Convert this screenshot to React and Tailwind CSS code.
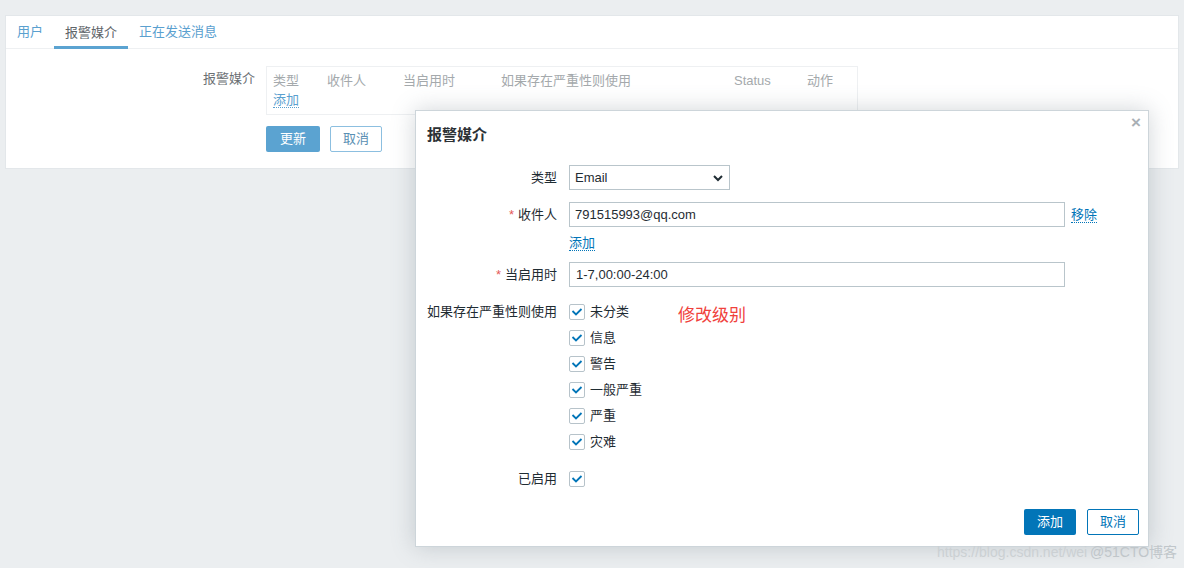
import React from 'react';

const FONT = { fontFamily: '"Liberation Sans", Arial, "Noto Sans CJK SC", sans-serif' };

function Check() {
    return (
        <span className="w-4 h-4 border border-[#b7c3ca] rounded-[2px] bg-white flex items-center justify-center shrink-0">
            <svg width="14" height="14" viewBox="0 0 14 14">
                <polyline points="2.5,6 6,9.5 11.5,4" fill="none" stroke="#0275b8" strokeWidth="1.8" />
            </svg>
        </span>
    );
}

function Link({ children }) {
    return <span className="text-[#0275b8] border-b border-dotted border-[#0275b8] leading-[15px]">{children}</span>;
}

export default function App() {
    const severities = ['未分类', '信息', '警告', '一般严重', '严重', '灾难'];

    return (
        <div className="relative w-[1184px] h-[568px] bg-[#ebeef0] overflow-hidden text-[13px]" style={FONT}>
            {/* page behind the dialog */}
            <div className="pt-[15px] px-[5px]">
                <div className="bg-white border border-[#e3e7ea] h-[154px]">
                    <div className="flex h-[33px] border-b border-[#eef0f2]">
                        <div className="px-[11px] flex items-center text-[#5aa0cf]">用户</div>
                        <div className="px-[11px] flex items-center text-[#606569] border-b-[3px] border-[#5ba3d1] pt-[3px] -mb-px">报警媒介</div>
                        <div className="px-[11px] flex items-center text-[#5aa0cf]">正在发送消息</div>
                    </div>
                    <div className="flex pt-[17px]">
                        <div className="w-[249px] text-right text-[#6b7074] pt-[5px] leading-[16px]">报警媒介</div>
                        <div className="ml-[11px]">
                            <div className="w-[592px] h-[49px] border border-[#eef0f2] pl-[6px] pt-[6px]">
                                <div className="flex text-[#a4a9ac] leading-[16px]">
                                    <div className="w-[54px]">类型</div>
                                    <div className="w-[76px]">收件人</div>
                                    <div className="w-[98px]">当启用时</div>
                                    <div className="w-[233px]">如果存在严重性则使用</div>
                                    <div className="w-[73px]">Status</div>
                                    <div>动作</div>
                                </div>
                                <div className="mt-[3px] flex">
                                    <span className="text-[#5aa0cf] border-b border-dotted border-[#5aa0cf] leading-[15px]">添加</span>
                                </div>
                            </div>
                            <div className="flex gap-[10px] mt-[11px]">
                                <div className="w-[54px] h-[26px] rounded-[2px] bg-[#5ba3d1] text-white flex items-center justify-center">更新</div>
                                <div className="w-[52px] h-[26px] rounded-[2px] border border-[#8cbfe0] text-[#5a8fb3] flex items-center justify-center">取消</div>
                            </div>
                        </div>
                    </div>
                </div>
            </div>

            {/* dialog */}
            <div className="absolute left-[415px] top-[110px] w-[734px] h-[437px] bg-white border border-[#cdd5da] shadow-[0_0_22px_rgba(90,105,115,0.28)] text-[#1f2c33]">
                <div className="h-[48px] px-[11px] flex items-center justify-between">
                    <div className="text-[15px] font-bold text-[#2c3135]">报警媒介</div>
                </div>
                <span className="absolute right-[7px] top-[4px] text-[#a9b0b5] text-[17px] font-bold leading-[16px]">×</span>

                <div className="pt-[6px]">
                    <div className="flex items-center">
                        <div className="w-[141px] text-right">类型</div>
                        <div className="ml-[12px] w-[161px] h-[25px] border border-[#b9c5cb] flex items-center justify-between pl-[5px] pr-[4px]">
                            <span>Email</span>
                            <svg width="14" height="14" viewBox="0 0 14 14">
                                <polyline points="3,5 7,9 11,5" fill="none" stroke="#1f2c33" strokeWidth="2" />
                            </svg>
                        </div>
                    </div>

                    <div className="flex items-center mt-[12px]">
                        <div className="w-[141px] text-right"><span className="text-[#e45959] mr-[4px]">*</span>收件人</div>
                        <div className="ml-[12px] w-[496px] h-[25px] border border-[#b9c5cb] flex items-center pl-[5px]">791515993@qq.com</div>
                        <div className="ml-[6px] flex"><Link>移除</Link></div>
                    </div>

                    <div className="flex mt-[8px] ml-[153px] h-[16px]">
                        <Link>添加</Link>
                    </div>

                    <div className="flex items-center mt-[11px]">
                        <div className="w-[141px] text-right"><span className="text-[#e45959] mr-[4px]">*</span>当启用时</div>
                        <div className="ml-[12px] w-[496px] h-[25px] border border-[#b9c5cb] flex items-center pl-[6px]">1-7,00:00-24:00</div>
                    </div>

                    <div className="flex mt-[17px]">
                        <div className="w-[141px] text-right leading-[16px] whitespace-nowrap">如果存在严重性则使用</div>
                        <div className="ml-[12px] w-[97px] flex flex-col gap-[10px]">
                            {severities.map(s => (
                                <div key={s} className="flex items-center gap-[5px] h-[16px]">
                                    <Check />
                                    <span>{s}</span>
                                </div>
                            ))}
                        </div>
                        <div className="ml-[12px] text-[17px] text-[#f0413c] leading-[24px]">修改级别</div>
                    </div>

                    <div className="flex items-center mt-[21px] h-[16px]">
                        <div className="w-[141px] text-right">已启用</div>
                        <div className="ml-[12px]"><Check /></div>
                    </div>

                    <div className="flex justify-end gap-[11px] mt-[22px] pr-[9px]">
                        <div className="w-[52px] h-[26px] rounded-[2px] bg-[#0275b8] text-white flex items-center justify-center">添加</div>
                        <div className="w-[52px] h-[26px] rounded-[2px] border border-[#0275b8] text-[#0275b8] flex items-center justify-center">取消</div>
                    </div>
                </div>
            </div>

            {/* watermark */}
            <div className="absolute left-[937px] top-[542px] text-[14px] text-[#cbd0d3] whitespace-nowrap">https://blog.csdn.net/wei</div>
            <div className="absolute left-[1090px] top-[542px] text-[14px] text-[#c0c6ca] whitespace-nowrap">@51CTO博客</div>
        </div>
    );
}
